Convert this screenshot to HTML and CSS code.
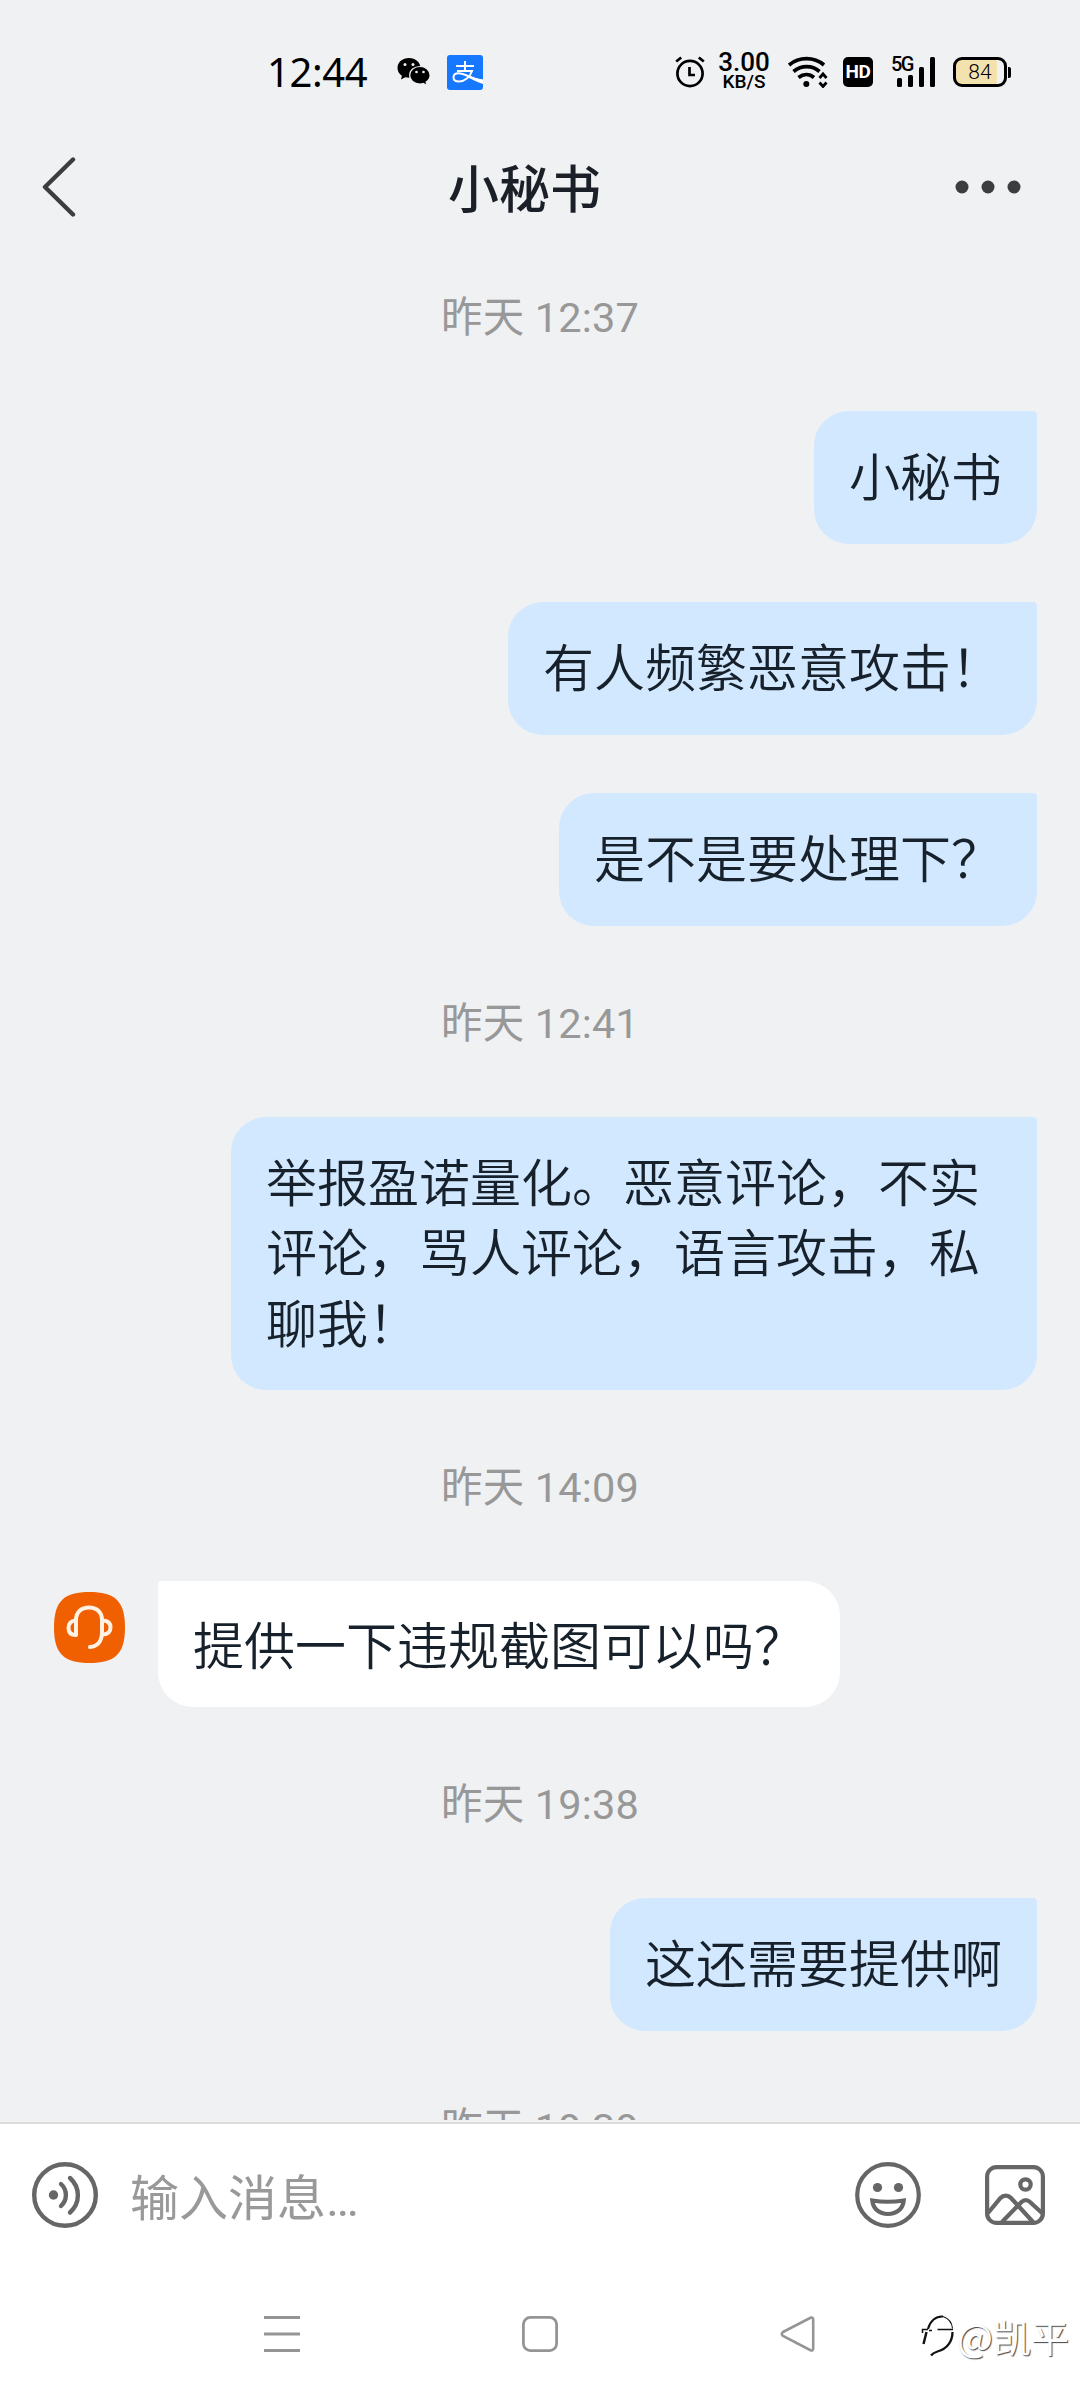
FILE: index.html
```html
<!DOCTYPE html>
<html lang="zh-CN">
<head>
<meta charset="utf-8">
<title>小秘书</title>
<link rel="stylesheet" href="styles.css">
</head>
<body>
<div class="screen">
  <div class="status">
    <span class="clock">12:44</span>
    <svg class="wechat" width="34" height="30" viewBox="0 0 34 30">
      <path d="M12 1C5.400 1 0.500 5.200 0.500 11c0 3.200 1.700 5.900 4.400 7.800L4 22.500l4.300-2.200c1.200 0.300 2.400 0.500 3.700 0.500C18.600 20.800 23.500 16.600 23.500 11S18.600 1 12 1z"/>
      <circle cx="8" cy="7.500" r="1.500" fill="#eef0f2"/><circle cx="16" cy="7.500" r="1.500" fill="#eef0f2"/>
      <path d="M23 9.500c-6 0-10.300 3.800-10.300 8.800S17 27 23 27c1.200 0 2.300-0.200 3.300-0.500l3.700 2-0.900-3.400c2.400-1.600 4-4 4-6.800 0-5-4.500-8.800-10.100-8.800z" stroke="#eef0f2" stroke-width="1.200"/>
      <circle cx="19.500" cy="15" r="1.300" fill="#eef0f2"/><circle cx="26.500" cy="15" r="1.300" fill="#eef0f2"/>
    </svg>
    <svg class="alipay" width="36" height="35" viewBox="0 0 36 35">
      <rect width="36" height="35" rx="3" fill="#1677ff"/>
      <g fill="none" stroke="#fff" stroke-width="2">
        <path d="M9 11h18M18 6v10M10 16h15C23 22 17.500 26.500 12 26.500c-3.500 0-5.500-1.500-5.500-4s2-4.300 5-4.300C17 18.200 24 23 35.500 26"/>
      </g>
      <path d="M20 20.500c5 2 9 3 16 4v4.500c-7-2.500-11-4.500-16-7z" fill="#fff"/>
    </svg>
    <span class="spacer"></span>
    <svg class="alarm" width="30" height="32" viewBox="0 0 30 32">
      <g fill="none" stroke="#000" stroke-width="2.700"><circle cx="15" cy="17.500" r="12.600"/><path d="M14.500 11v8h5.500M1.200 5.500l5-4M28.800 5.500l-5-4"/></g>
    </svg>
    <span class="speed"><b class="rate">3.00</b><b class="unit">KB/S</b></span>
    <svg class="wifi" width="40" height="32" viewBox="0 0 40 32">
      <g fill="none" stroke="#000" stroke-width="3.700"><path d="M1 9c10-8.500 25-8.500 35 0M5.500 15.500c8-6.500 18.500-6.500 26 0M10.500 21.500c5-4 11-4 15.500 0"/></g>
      <circle cx="18.300" cy="28" r="3"/>
      <path d="M31.500 22l3.500-4 3.500 4M31.500 26.500l3.500 4 3.500-4" fill="none" stroke="#000" stroke-width="2.800"/>
    </svg>
    <span class="hd">HD</span>
    <span class="cell"><span class="gen">5G</span>
      <svg class="bars" width="44" height="30" viewBox="0 0 44 30"><rect x="6" y="21" width="5" height="9" rx="1.500"/><rect x="17" y="18" width="5" height="12" rx="1.500"/><rect x="28" y="10" width="5" height="20" rx="1.500"/><rect x="39" y="0" width="5" height="30" rx="1.500"/></svg>
    </span>
    <span class="battery">84</span><span class="nub"></span>
  </div>

  <div class="header">
    <svg width="52" height="64" viewBox="0 0 52 64"><path d="M31 4.500L3 32l28 27.500" fill="none" stroke="#3c3d3f" stroke-width="4.400" stroke-linecap="round" stroke-linejoin="round"/></svg>
    <h1 class="title">小秘书</h1>
    <svg width="66" height="14" viewBox="0 0 66 14" fill="#3c3d3f"><circle cx="7" cy="7" r="6.500"/><circle cx="33" cy="7" r="6.500"/><circle cx="59" cy="7" r="6.500"/></svg>
  </div>

  <div class="chat">
    <div class="time">昨天 12:37</div>
    <div class="group">
      <div class="bubble">小秘书</div>
      <div class="bubble">有人频繁恶意攻击！</div>
      <div class="bubble">是不是要处理下？</div>
    </div>
    <div class="time">昨天 12:41</div>
    <div class="group"><div class="bubble long">举报盈诺量化。恶意评论，不实评论，骂人评论，语言攻击，私聊我！</div></div>
    <div class="time">昨天 14:09</div>
    <div class="incoming">
      <svg class="avatar" width="71" height="71" viewBox="0 0 71 71">
        <path d="M35.500 0C60 0 71 8 71 35.500S60 71 35.500 71 0 63 0 35.500 11 0 35.500 0z" fill="#f06000"/>
        <g fill="none" stroke="#fff1e4" stroke-width="4" stroke-linecap="round" stroke-linejoin="round">
          <path d="M22 42V28C22 20 27.500 15.500 35 15.500S48 20 48 28v12c0 9-4.500 14.500-12 15"/>
          <path d="M22 28.500c-5 0-7.500 3-7.500 7.500s2.500 7 7.500 7zM48 28.500c6 0 8.500 2.500 8.500 7s-2.500 7-8.500 7"/>
        </g>
      </svg>
      <div class="bubble white">提供一下违规截图可以吗？</div>
    </div>
    <div class="time">昨天 19:38</div>
    <div class="group"><div class="bubble">这还需要提供啊</div></div>
    <div class="time">昨天 19:39</div>
  </div>

  <div class="composer">
    <svg width="66" height="66" viewBox="0 0 66 66">
      <g fill="none" stroke="#666" stroke-width="4.400" stroke-linecap="round"><circle cx="33" cy="33" r="30.800"/><path d="M29 22c6.500 6 6.500 16 0 22M38 16c10.500 9.500 10.500 25 0 34.500"/></g>
      <circle cx="21.500" cy="33" r="4.700" fill="#666"/>
    </svg>
    <span class="placeholder">输入消息…</span>
    <svg class="smile" width="66" height="66" viewBox="0 0 66 66">
      <g fill="none" stroke="#666" stroke-width="4.200"><circle cx="33" cy="33" r="30.800"/><path d="M17.300 38.500c10 1.600 21 1.600 31.400 0C48 47 41.500 52 33 52S18 47 17.300 38.500z"/></g>
      <circle cx="22.500" cy="25.500" r="4.600" fill="#666"/><circle cx="43.500" cy="25.500" r="4.600" fill="#666"/>
    </svg>
    <svg class="picture" width="60" height="60" viewBox="0 0 60 60">
      <g fill="none" stroke="#666" stroke-width="4.200"><rect x="2.100" y="2.100" width="55.800" height="55.800" rx="9.500"/><circle cx="40.500" cy="19.500" r="5.200"/><path d="M3 48l12.500-15c3-3.300 7.500-3.300 10.500 0L48 57M17 57l19.500-20c2.500-2.600 6-2.600 8.500 0L57 48"/></g>
    </svg>
  </div>

  <div class="nav">
    <svg width="36" height="36" viewBox="0 0 36 36"><path d="M0 1.600h36M0 18h36M0 34.400h36" stroke="#959595" stroke-width="3"/></svg>
    <svg width="36" height="36" viewBox="0 0 36 36"><rect x="1.400" y="1.400" width="33.200" height="33.200" rx="7" fill="none" stroke="#959595" stroke-width="2.800"/></svg>
    <svg width="36" height="36" viewBox="0 0 36 36"><path d="M3 16L30.500 1.800q2.700-1 2.700 2v28.400q0 3-2.700 2L3 20q-2.500-2 0-4z" fill="none" stroke="#959595" stroke-width="2.600"/></svg>
    <div class="mark">
      <svg width="36" height="46" viewBox="0 0 36 46" fill="none" stroke="#111">
        <path d="M1.500 20V16.500h5.500M8 17.500h3M16.500 16.500h15.500" stroke-width="1.500"/>
        <path d="M7 16C9 8 15 3 22 3.500" stroke-width="2"/><path d="M22 3.500c6 2 9 7 9.500 12" stroke-width="1.100"/>
        <path d="M5.500 19L2.500 31" stroke-width="2.400"/>
        <path d="M31.500 19c0 9-5 17-15 19.500-3 1-5 2-6.500 4" stroke-width="2.300"/>
      </svg>
      <span>@凯平</span>
    </div>
  </div>
</div>
</body>
</html>
```
FILE: styles.css
```css
* { box-sizing: border-box; }
body {
  margin: 0;
  background: #eff1f3;
  font-family: Roboto, "Noto Sans CJK SC", sans-serif;
  color: #17212b;
}
svg { display: block; flex: none; }
.screen {
  width: 1080px;
  height: 2400px;
  display: flex;
  flex-direction: column;
  overflow: hidden;
}

.status {
  height: 144px;
  flex: none;
  display: flex;
  align-items: center;
  padding: 0 69px 0 267px;
  color: #000;
}
.clock {
  width: 130px;
  font: 400 40px/48px "Noto Sans", sans-serif;
  letter-spacing: -0.400px;
}
.alipay { margin-left: 16px; }
.spacer { flex: 1; }
.alarm { margin-right: 13px; }
.speed {
  width: 52px;
  margin-right: 18px;
  display: flex;
  flex-direction: column;
  align-items: center;
}
.rate { font: 500 26px/19px Roboto, sans-serif; }
.unit { font: 500 19px/20px Roboto, sans-serif; }
.wifi { margin-right: 15px; }
.hd {
  width: 30px;
  height: 30px;
  margin-right: 18px;
  border-radius: 5px;
  background: #000;
  color: #fff;
  font: bold 19px/30px Roboto, sans-serif;
  letter-spacing: -0.500px;
  text-align: center;
}
.cell { position: relative; width: 44px; height: 30px; margin-right: 18px; }
.gen {
  position: absolute;
  left: 0;
  top: -2px;
  font: 500 20px/18px Roboto, sans-serif;
  letter-spacing: -1.500px;
}
.battery {
  width: 54px;
  height: 30px;
  border: 3px solid #000;
  border-radius: 9px;
  background: linear-gradient(90deg, #f4e2ae 85%, #eff1f3 85%);
  font: 300 21px/24px Roboto, sans-serif;
  text-align: center;
}
.nub { width: 3px; height: 11px; margin-left: 1px; background: #000; border-radius: 0 2px 2px 0; }

.header {
  height: 86px;
  flex: none;
  display: flex;
  align-items: center;
  justify-content: space-between;
  padding: 0 59px 0 42px;
}
.title { margin: 7px 0 0; font-size: 51px; line-height: 70px; font-weight: 500; color: #1b1f27; }

.chat {
  height: 1890px;
  flex: none;
  padding-top: 63px;
  overflow: hidden;
}
.time {
  height: 48px;
  font-size: 41.500px;
  line-height: 50px;
  letter-spacing: 0.150px;
  text-align: center;
  color: #989898;
}
.group {
  display: flex;
  flex-direction: column;
  align-items: flex-end;
  gap: 58px;
  padding: 70px 43px 73px 0;
}
.bubble {
  height: 133px;
  padding: 28px 35px 0;
  border-radius: 35px 4px 35px 35px;
  background: #d2e8ff;
  font-family: "Noto Sans CJK SC", sans-serif;
  font-size: 51px;
  line-height: 70.300px;
  font-weight: 350;
}
.long { width: 806px; height: 273px; }
.incoming {
  display: flex;
  align-items: flex-start;
  gap: 33px;
  padding: 70px 0 73px 54px;
}
.avatar { margin-top: 11px; }
.white {
  height: 126px;
  padding-top: 27px;
  background: #fff;
  border-radius: 4px 35px 35px 35px;
}

.composer {
  height: 144px;
  flex: none;
  margin-top: 2px;
  display: flex;
  align-items: center;
  padding: 0 35px 0 32px;
  border-top: 2px solid #dcdcdc;
  background: #fff;
}
.placeholder { flex: 1; margin: 10px 0 0 32px; font-size: 49px; line-height: 66px; color: #999; }
.picture { margin-left: 64px; }

.nav {
  flex: 1;
  display: flex;
  align-items: center;
  gap: 222px;
  padding: 2px 0 0 264px;
  background: #fff;
}
.mark {
  display: flex;
  align-items: center;
  margin: 4px 0 0 -117px;
  flex: none;
}
.mark span {
  color: #fff;
  font-family: "Noto Sans CJK SC", sans-serif;
  font-size: 38px;
  line-height: 44px;
  text-shadow: 1px 1px 1px #444;
}
```
